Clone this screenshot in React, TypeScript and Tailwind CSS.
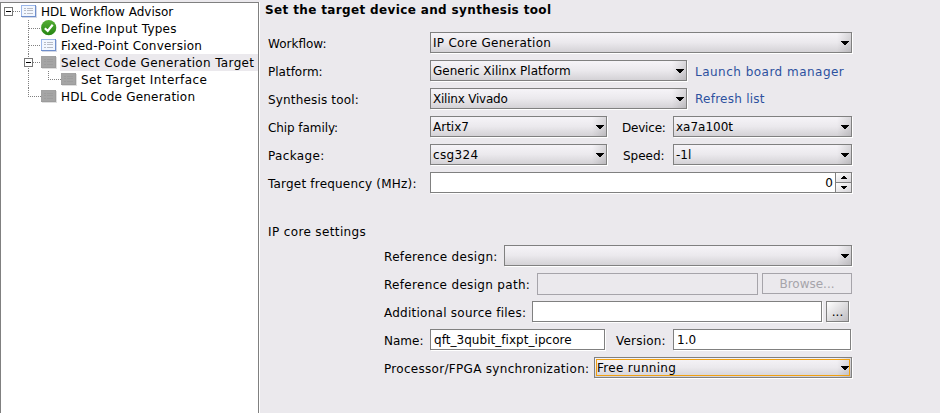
import React from "react";

type IconKind = "list" | "check" | "gray";

function ListIcon({ gray }: { gray?: boolean }) {
  return (
    <svg width="16" height="17" className="shrink-0" shapeRendering="crispEdges">
      <rect x="1" y="3" width="15" height="12" fill={gray ? "#dedede" : "#d3d8e6"} />
      <rect x="0" y="2" width="15" height="12" fill={gray ? "#9c9c9c" : "#6f8fcc"} />
      <rect x="0" y="2" width="14" height="11" fill={gray ? "#a2a2a2" : "#9ab6ea"} />
      <rect x="1" y="3" width="13" height="10" fill={gray ? "#a5a5a5" : "#f2f7ff"} />
      {[5, 7, 10].map((y) => (
        <g key={y} fill={gray ? "#9d9d9d" : "#b8bcc6"}>
          <rect x="3" y={y} width="2" height="1" />
          <rect x="6" y={y} width="6" height="1" />
        </g>
      ))}
    </svg>
  );
}

function CheckIcon() {
  return (
    <svg width="16" height="17" className="shrink-0">
      <defs>
        <linearGradient id="ok" x1="0" y1="0" x2="0" y2="1">
          <stop offset="0" stopColor="#55ad35" />
          <stop offset="1" stopColor="#248512" />
        </linearGradient>
      </defs>
      <circle cx="7.7" cy="7.7" r="7.6" fill="url(#ok)" />
      <path d="M3.8 8.2 L6.7 10.9 L11.7 4.7" fill="none" stroke="#fff" strokeWidth="2.2" />
    </svg>
  );
}

// Connector lines and the expander box in front of each tree item.
function Gutter({ width, lines, box }: { width: number; lines: string; box?: number }) {
  return (
    <svg width={width} height="17" className="shrink-0" shapeRendering="crispEdges">
      <path d={lines} stroke="#808080" strokeDasharray="1 1" fill="none" />
      {box !== undefined && (
        <>
          <rect x={box + 0.5} y="4.5" width="8" height="8" fill="#fff" stroke="#777" />
          <path d={`M${box + 2} 8.5h5`} stroke="#000" />
        </>
      )}
    </svg>
  );
}

interface NodeProps {
  width: number;
  lines: string;
  box?: number;
  icon: IconKind;
  text: string;
  textClass?: string;
}

const nodes: NodeProps[] = [
  { width: 20, lines: "M12 8.5H20", box: 3, icon: "list", text: "HDL Workflow Advisor" },
  { width: 40, lines: "M27.5 0V17M28 8.5H40", icon: "check", text: "Define Input Types", textClass: "tracking-[0.22px]" },
  { width: 40, lines: "M27.5 0V17M28 8.5H40", icon: "list", text: "Fixed-Point Conversion", textClass: "tracking-[0.22px]" },
  { width: 40, lines: "M27.5 0V17M32 8.5H40", box: 23, icon: "gray", text: "Select Code Generation Target", textClass: "bg-[#ebe9ed] flex-1 tracking-[0.35px]" },
  { width: 60, lines: "M27.5 0V17M47.5 0V8.5H60", icon: "gray", text: "Set Target Interface", textClass: "tracking-[0.4px]" },
  { width: 40, lines: "M27.5 0V8.5H40", icon: "gray", text: "HDL Code Generation", textClass: "tracking-[0.21px]" },
];

function TreeNode({ width, lines, box, icon, text, textClass = "" }: NodeProps) {
  return (
    <div className="flex h-[17px]">
      <Gutter width={width} lines={lines} box={box} />
      {icon === "check" ? <CheckIcon /> : <ListIcon gray={icon === "gray"} />}
      <span className={`ml-[3px] h-[17px] pl-px leading-[19px] ${textClass}`}>{text}</span>
    </div>
  );
}

function Select({ className, value = "", focus }: { className: string; value?: string; focus?: boolean }) {
  return (
    <div className={`h-[21px] shrink-0 border border-[#808080] bg-linear-to-b from-[#f6f4f8] via-[#ebe9ed] to-[#d4d2d6] shadow-[1px_1px_0_#fff] ${className}`}>
      <div className={`flex h-[19px] justify-between bg-linear-to-l from-black/12 to-transparent to-[14px] ${focus ? "p-px" : ""}`}>
        <div className={`flex flex-1 justify-between ${focus ? "border border-[#f0a010]" : ""}`}>
          <span className={focus ? "h-[15px] leading-[17px]" : "h-[19px] pl-[2px] leading-[21px]"}>{value}</span>
          <svg width="8" height="4" className={focus ? "mt-[6px]" : "mt-[8px] mr-[2px]"} shapeRendering="crispEdges">
            <path d="M0 0h8v1h-1v1h-1v1h-1v1h-2v-1h-1v-1h-1v-1h-1z" />
          </svg>
        </div>
      </div>
    </div>
  );
}

function Field({ className, value = "" }: { className: string; value?: string }) {
  return (
    <div className={`h-[21px] shrink-0 border border-[#808080] bg-white pl-[3px] leading-[20px] shadow-[1px_1px_0_#fff] ${className}`}>
      {value}
    </div>
  );
}

function Label({ className, children }: { className: string; children: string }) {
  return <span className={`shrink-0 leading-[24px] ${className}`}>{children}</span>;
}

function Row({ children, className = "" }: { children: React.ReactNode; className?: string }) {
  return <div className={`flex h-[28px] items-start ${className}`}>{children}</div>;
}

function SpinButton({ up }: { up?: boolean }) {
  return (
    <div className={`flex flex-1 items-center justify-center bg-linear-to-br from-white to-[#d6d4d8] ${up ? "border-b border-[#808080]" : ""}`}>
      <svg width="6" height="3" shapeRendering="crispEdges">
        <path d={up ? "M2 0h2v1h1v1h1v1h-6v-1h1v-1h1z" : "M0 0h6v1h-1v1h-1v1h-2v-1h-1v-1h-1z"} />
      </svg>
    </div>
  );
}

export default function App() {
  return (
    <div className="flex h-[413px] w-[940px] overflow-hidden bg-[#ebe9ed] font-['DejaVu_Sans',sans-serif] text-[12px] whitespace-nowrap text-black">
      <aside className="mt-[2px] w-[259px] shrink-0 border border-b-0 border-[#808080] bg-white shadow-[1px_0_0_#fff]">
        {nodes.map((n) => (
          <TreeNode key={n.text} {...n} />
        ))}
      </aside>
      <main className="flex-1 pl-[9px]">
        <h1 className="-ml-[3px] h-[32px] text-[12px] leading-[21px] font-bold tracking-[0.36px]">Set the target device and synthesis tool</h1>
        <Row>
          <Label className="w-[162px]">Workflow:</Label>
          <Select className="w-[422px] tracking-[0.28px]" value="IP Core Generation" />
        </Row>
        <Row>
          <Label className="w-[162px]">Platform:</Label>
          <Select className="w-[257px]" value="Generic Xilinx Platform" />
          <a className="ml-[8px] leading-[24px] tracking-[0.48px] text-[#2d519f]">Launch board manager</a>
        </Row>
        <Row>
          <Label className="w-[162px] tracking-[0.16px]">Synthesis tool:</Label>
          <Select className="w-[257px] tracking-[-0.22px]" value="Xilinx Vivado" />
          <a className="ml-[8px] leading-[22px] tracking-[0.25px] text-[#2d519f]">Refresh list</a>
        </Row>
        <Row>
          <Label className="w-[162px] tracking-[-0.08px]">Chip family:</Label>
          <Select className="w-[177px]" value="Artix7" />
          <Label className="ml-[15px] w-[51px] tracking-[-0.2px]">Device:</Label>
          <Select className="w-[179px]" value="xa7a100t" />
        </Row>
        <Row>
          <Label className="w-[162px] tracking-[0.35px]">Package:</Label>
          <Select className="w-[177px] tracking-[0.35px]" value="csg324" />
          <Label className="ml-[16px] w-[50px]">Speed:</Label>
          <Select className="w-[179px]" value="-1l" />
        </Row>
        <Row>
          <Label className="w-[162px] tracking-[0.2px]">Target frequency (MHz):</Label>
          <div className="flex h-[21px] w-[422px] border border-[#808080] bg-white shadow-[1px_1px_0_#fff]">
            <span className="flex-1 pr-[2px] text-right leading-[20px]">0</span>
            <div className="flex w-[16px] flex-col border-l border-[#808080]">
              <SpinButton up />
              <SpinButton />
            </div>
          </div>
        </Row>
        <h2 className="mt-[20px] h-[25px] leading-[24px] tracking-[0.37px]">IP core settings</h2>
        <section className="pl-[116px]">
          <Row>
            <Label className="w-[120px] tracking-[0.33px]">Reference design:</Label>
            <Select className="w-[348px]" />
          </Row>
          <Row>
            <Label className="w-[153px] tracking-[0.32px]">Reference design path:</Label>
            <div className="h-[22px] w-[221px] border border-[#a6a4aa]" />
            <button className="ml-[4px] h-[21px] w-[90px] border border-[#a6a4aa] text-center leading-[21px] text-[#a6a4aa]">Browse...</button>
          </Row>
          <Row>
            <Label className="w-[148px] tracking-[0.25px]">Additional source files:</Label>
            <Field className="w-[290px]" />
            <button className="ml-[4px] h-[21px] w-[23px] border border-[#808080] bg-linear-to-br from-white to-[#bfbdc1] text-center leading-[21px] shadow-[1px_1px_0_#fff]">...</button>
          </Row>
          <Row>
            <Label className="w-[46px]">Name:</Label>
            <Field className="w-[175px] tracking-[0.04px]" value="qft_3qubit_fixpt_ipcore" />
            <Label className="ml-[11px] w-[57px] tracking-[0.2px]">Version:</Label>
            <Field className="w-[178px]" value="1.0" />
          </Row>
          <Row>
            <Label className="w-[210px] tracking-[0.3px]">Processor/FPGA synchronization:</Label>
            <Select className="w-[258px] tracking-[0.3px]" value="Free running" focus />
          </Row>
        </section>
      </main>
    </div>
  );
}
